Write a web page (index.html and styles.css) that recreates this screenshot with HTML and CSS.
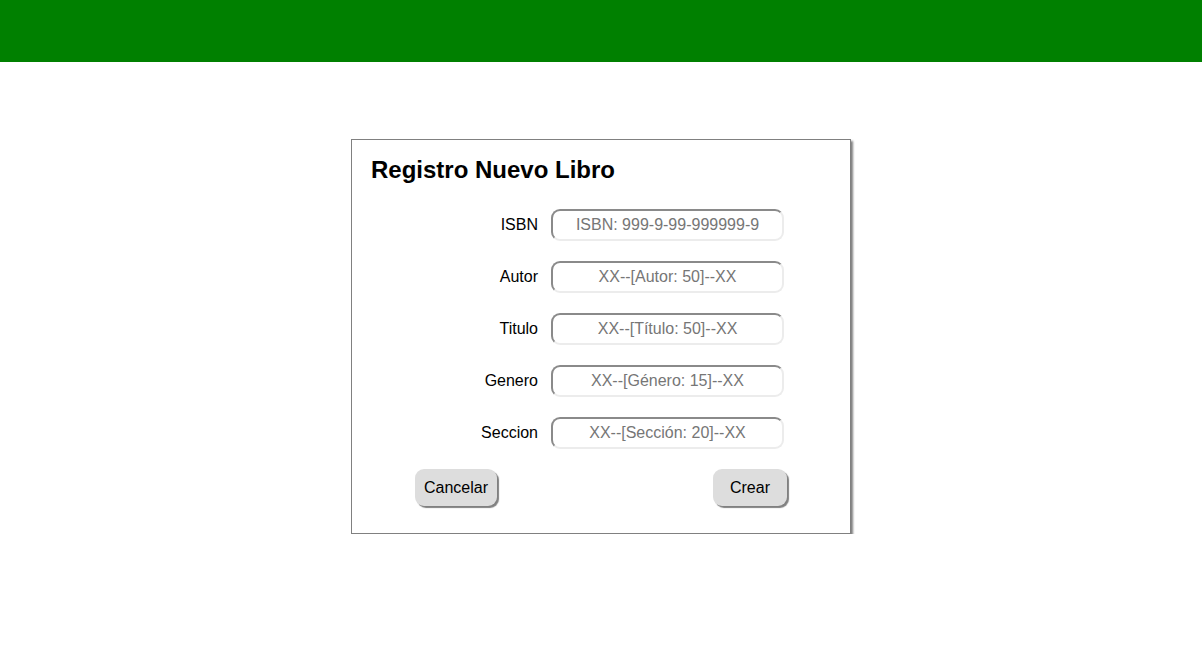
FILE: index.html
```html
<!DOCTYPE html>
<html lang="es">
<head>
<meta charset="utf-8">
<title>Registro Nuevo Libro</title>
<link rel="stylesheet" href="styles.css">
</head>
<body>
<header class="topbar"></header>
<main class="page">
  <section class="card">
    <h1 class="card-title">Registro Nuevo Libro</h1>
    <form class="form">
      <div class="row"><label class="label" for="isbn">ISBN</label><input class="field" id="isbn" placeholder="ISBN: 999-9-99-999999-9"></div>
      <div class="row"><label class="label" for="autor">Autor</label><input class="field" id="autor" placeholder="XX--[Autor: 50]--XX"></div>
      <div class="row"><label class="label" for="titulo">Titulo</label><input class="field" id="titulo" placeholder="XX--[Título: 50]--XX"></div>
      <div class="row"><label class="label" for="genero">Genero</label><input class="field" id="genero" placeholder="XX--[Género: 15]--XX"></div>
      <div class="row"><label class="label" for="seccion">Seccion</label><input class="field" id="seccion" placeholder="XX--[Sección: 20]--XX"></div>
      <div class="actions">
        <button type="button" class="btn">Cancelar</button>
        <button type="button" class="btn btn-crear">Crear</button>
      </div>
    </form>
  </section>
</main>
</body>
</html>
```
FILE: styles.css
```css
* { box-sizing: border-box; }
html, body { margin: 0; padding: 0; background: #fff; }
body { font-family: "Liberation Sans", Arial, sans-serif; color: #000; }
.topbar { height: 62px; background: #008000; }
.page { display: flex; justify-content: center; padding-top: 77px; }
.card {
  width: 500px;
  border: 1px solid #808080;
  box-shadow: 2px 2px 2px #808080;
  padding: 16px 0 27px 19px;
  background: #fff;
}
.card-title {
  margin: 0 0 25px 0;
  font-size: 24px;
  font-weight: bold;
  line-height: 28px;
}
.form { display: flex; flex-direction: column; }
.row { display: flex; align-items: center; height: 31px; margin-bottom: 21px; }
.label { width: 167px; text-align: right; font-size: 16px; margin-right: 13px; }
.field {
  width: 233px;
  height: 32px;
  border-radius: 9px;
  border-width: 2px;
  border-style: solid;
  border-color: #8a8a8a #ececec #ececec #8a8a8a;
  font-family: "Liberation Sans", Arial, sans-serif;
  font-size: 16px;
  text-align: center;
  padding: 0 4px;
  outline: none;
}
.field::placeholder { color: #767676; }
.actions { display: flex; justify-content: space-between; padding: 0 63px 0 44px; }
.btn {
  height: 37px;
  padding: 0 9px;
  border: none;
  border-radius: 9px;
  background: #dddddd;
  box-shadow: 2px 2px 1px #808080;
  font-family: "Liberation Sans", Arial, sans-serif;
  font-size: 16px;
  color: #000;
}
.btn-crear { width: 74px; padding: 0; }
```
